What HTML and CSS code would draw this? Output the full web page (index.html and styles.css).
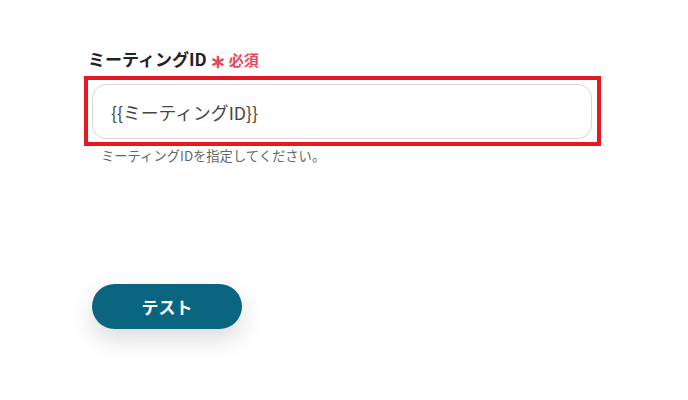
FILE: index.html
```html
<!DOCTYPE html>
<html lang="ja">
<head>
<meta charset="utf-8">
<link rel="stylesheet" href="styles.css">
</head>
<body>
<div class="page">
  <div class="field">
    <div class="label">ミーティングID<span class="req"><span class="star">∗</span>必須</span></div>
    <div class="highlight">
      <div class="input">{{ミーティングID}}</div>
    </div>
    <div class="help">ミーティングIDを指定してください。</div>
  </div>
  <button class="btn">テスト</button>
</div>
</body>
</html>
```
FILE: styles.css
```css
html, body {
  margin: 0;
  padding: 0;
  background: #ffffff;
}
body {
  font-family: "Noto Sans CJK JP", "Noto Sans", sans-serif;
  color: #222;
}
.page {
  box-sizing: border-box;
  min-height: 400px;
  padding-top: 47px;
  padding-left: 84px;
  padding-bottom: 40px;
}
.field {
  display: flex;
  flex-direction: column;
  width: 517px;
}
.label {
  padding-left: 4px;
  font-size: 17px;
  line-height: 23px;
  font-weight: 700;
  color: #222;
  margin-bottom: 5px;
  display: flex;
  align-items: baseline;
}
.req {
  color: #e8475a;
  font-size: 15px;
  font-weight: 700;
  margin-left: 3px;
  display: inline-flex;
  align-items: baseline;
}
.star {
  font-size: 19px;
  margin-right: 3px;
  line-height: 0;
  position: relative;
  top: 2px;
}
.highlight {
  box-sizing: border-box;
  width: 517px;
  border: 4px solid #e6191f;
  padding: 4px 5px 3px 4px;
}
.input {
  box-sizing: border-box;
  height: 55px;
  border: 1px solid #d4d7dc;
  border-radius: 14px;
  padding-left: 18px;
  display: flex;
  align-items: center;
  font-size: 17.8px;
  color: #444;
}
.help {
  margin-top: 1px;
  padding-left: 17px;
  font-size: 13.3px;
  line-height: 18px;
  color: #666;
}
.btn {
  display: block;
  margin-top: 119px;
  margin-left: 8px;
  width: 150px;
  height: 45px;
  border: none;
  border-radius: 23px;
  background: #0a6680;
  color: #fff;
  font-family: "Noto Sans CJK JP", "Noto Sans", sans-serif;
  font-size: 17px;
  font-weight: 700;
  box-shadow: 0 10px 24px rgba(0, 0, 0, 0.15);
  padding: 0;
}
```
